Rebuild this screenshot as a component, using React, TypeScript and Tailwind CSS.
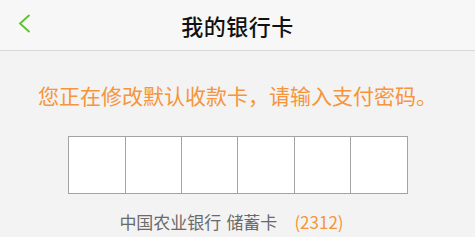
export default function App() {
  const cells = [0, 1, 2, 3, 4, 5]
  return (
    <div
      className="w-[475px] h-[237px] bg-[#f3f3f3] overflow-hidden"
      style={{ fontFamily: '"Noto Sans CJK SC", "Noto Sans", sans-serif' }}
    >
      <div className="relative h-[51px] bg-[#f7f7f7] border-b border-[#d8d8d8] flex items-center justify-center">
        <svg className="absolute left-[18px] top-[14px]" width="13" height="19" viewBox="0 0 13 19">
          <path d="M11.5 1 L2 9.5 L11.5 18" fill="none" stroke="#5cc12f" strokeWidth="1.8" />
        </svg>
        <h1 className="text-[22px] font-medium text-[#111] leading-none tracking-[0.5px]">我的银行卡</h1>
      </div>

      <p className="mt-[32px] text-center text-[21px] leading-[24px] text-[#f6953b]">
        您正在修改默认收款卡，请输入支付密码。
      </p>

      <div className="mx-auto mt-[29px] w-[340px] h-[58px] grid grid-cols-6 border border-[#a3a3a3] bg-white">
        {cells.map(i => (
          <div key={i} className={i > 0 ? 'border-l border-[#a3a3a3]' : ''} />
        ))}
      </div>

      <p className="mt-[17px] pr-[12px] text-center text-[17px] leading-[22px] text-[#6a6a6a]">
        中国农业银行<span className="ml-[5px]">储蓄卡</span>
        <span className="ml-[17px] text-[#f6953b]">(2312)</span>
      </p>
    </div>
  )
}
